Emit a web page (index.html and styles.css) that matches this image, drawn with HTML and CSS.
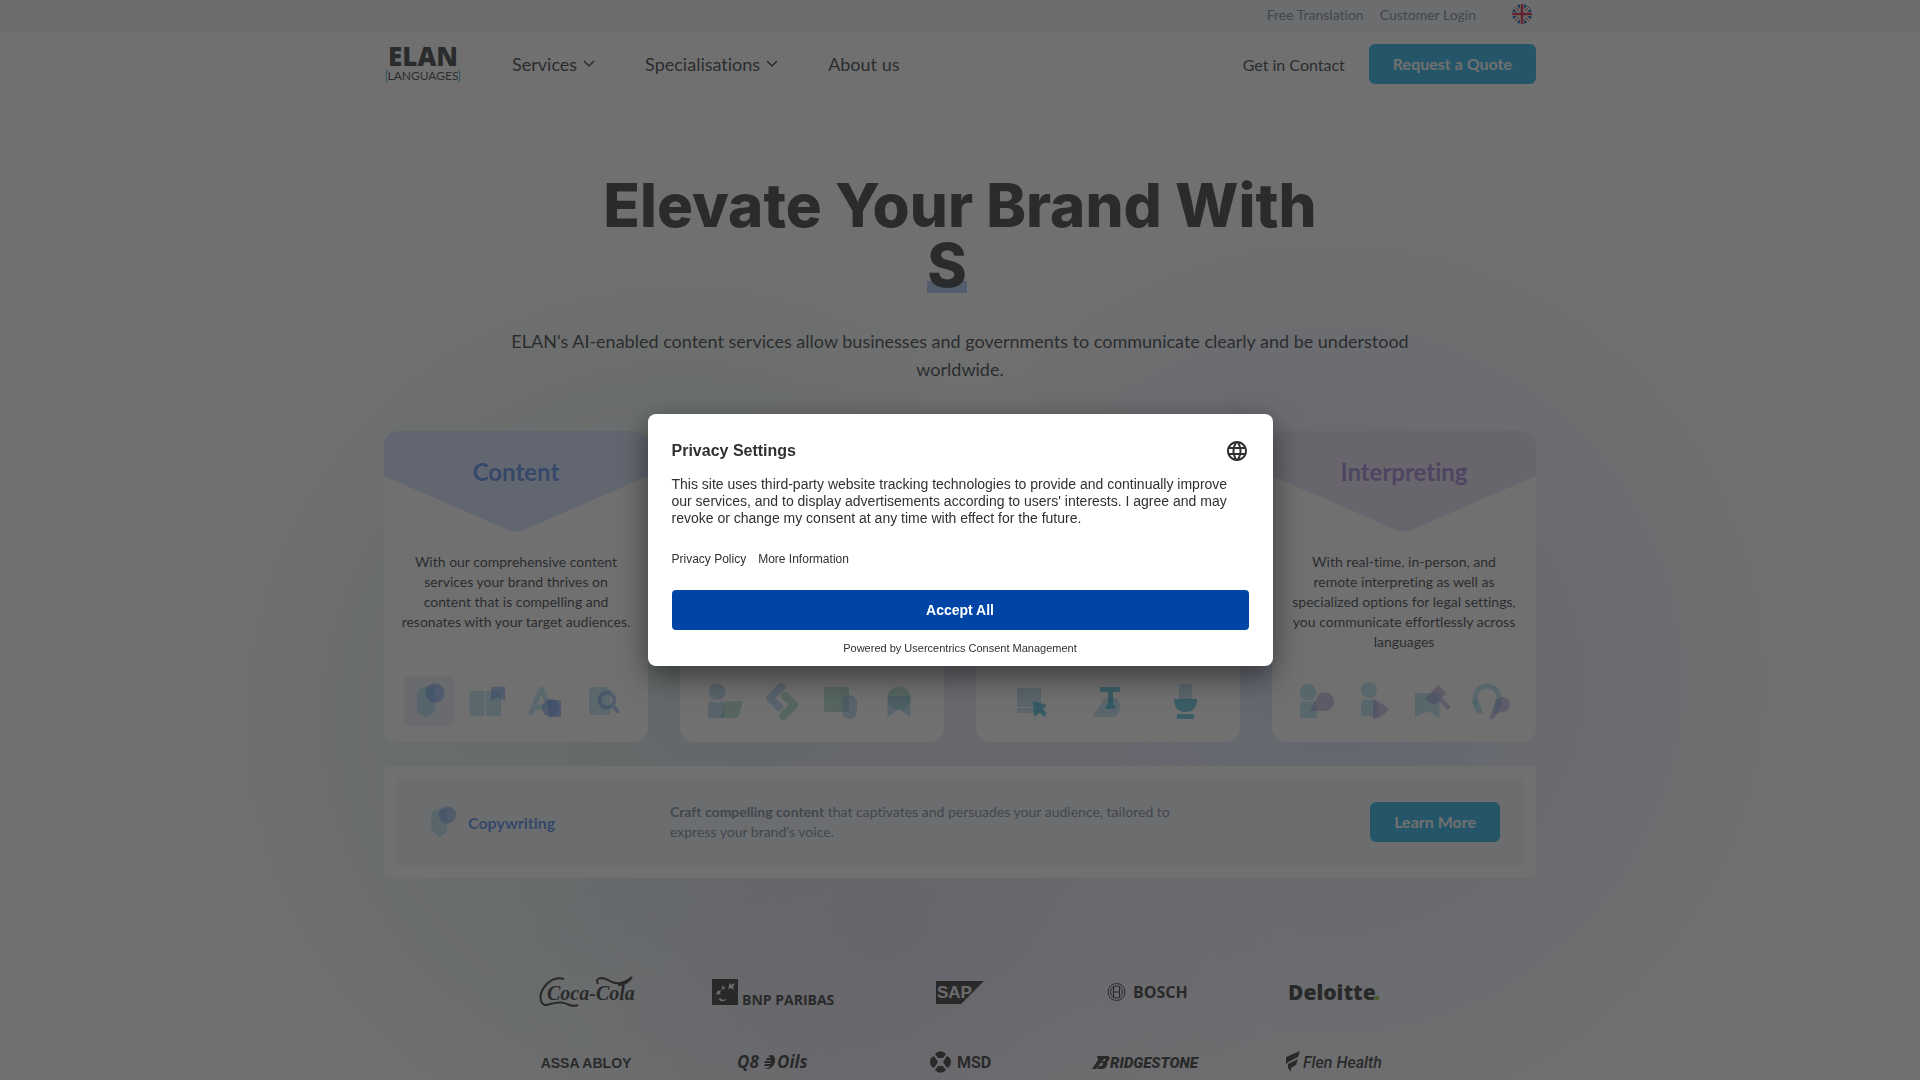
FILE: index.html
```html
<!DOCTYPE html>
<html lang="en">
<head>
    <meta charset="UTF-8">
    <meta name="viewport" content="width=device-width, initial-scale=1.0">
    <title>ELAN Languages</title>
    <link rel="stylesheet" href="styles.css">
</head>
<body>
    <div class="top-bar">
        <div class="container top-bar-inner">
            <a href="#">Free Translation</a>
            <a href="#">Customer Login</a>
            <button type="button" class="language" aria-label="Language">
                <svg width="20" height="20" viewBox="0 0 20 20">
                    <clipPath id="flag"><circle cx="10" cy="10" r="10"/></clipPath>
                    <g clip-path="url(#flag)">
                        <path fill="#f0f0f0" d="M0 0h20v20H0z"/>
                        <path fill="#0052b4" d="M3 0h5v5zM0 3v5h5zM12 0h5l-5 5zM20 3v5h-5zM0 12h5l-5 5zM8 15v5H3zM12 15v5h5zM15 12h5v5z"/>
                        <path fill="#d80027" d="M8.700 0h2.600v8.700H20v2.600h-8.700V20H8.700v-8.700H0V8.700h8.700z"/>
                        <path stroke="#d80027" stroke-width="1" d="M3 3l4 4M17 3l-4 4M3 17l4-4M17 17l-4-4"/>
                    </g>
                </svg>
            </button>
        </div>
    </div>

    <header class="container header">
        <a href="#" class="logo" aria-label="ELAN Languages">
            <svg width="78" height="40" viewBox="0 0 78 40">
                <text class="logo-name" x="39" y="22" text-anchor="middle">ELAN</text>
                <text class="logo-sub" x="39" y="36" text-anchor="middle">LANGUAGES</text>
                <path class="logo-brace" d="M4 26q-1.500 0-1.500 2v2.500L1.500 32l1 1.500V36q0 2 1.500 2M74 26q1.500 0 1.500 2v2.500l1 1.500-1 1.500V36q0 2-1.500 2"/>
            </svg>
        </a>
        <nav class="nav">
            <a href="#">Services <svg class="chevron" viewBox="0 0 12 8"><path d="M1 1l5 5 5-5"/></svg></a>
            <a href="#">Specialisations <svg class="chevron" viewBox="0 0 12 8"><path d="M1 1l5 5 5-5"/></svg></a>
            <a href="#">About us</a>
        </nav>
        <div class="header-actions">
            <a href="#">Get in Contact</a>
            <button type="button" class="button">Request a Quote</button>
        </div>
    </header>

    <main class="main">
        <section class="container hero">
            <h1>Elevate Your Brand With<br><span class="typed">S</span><span class="caret"></span></h1>
            <p>ELAN's AI-enabled content services allow businesses and governments to communicate clearly and be understood worldwide.</p>
        </section>

        <section class="container">
            <div class="cards">
                <article class="card content">
                    <div class="card-head">
                        <svg viewBox="0 0 264 101" preserveAspectRatio="none"><path d="M0 0h264v45L142 98q-10 5-20 0L0 45z"/></svg>
                        <h2>Content</h2>
                    </div>
                    <p>With our comprehensive content services your brand thrives on content that is compelling and resonates with your target audiences.</p>
                    <div class="icons">
                        <button type="button" class="icon active" aria-label="Copywriting">
                            <svg viewBox="0 0 36 36"><path class="base" d="M6 11q0-7 9-7.500h9V26q0 3-3 5.500L15.500 35 9 31q-3-2-3-5z"/><circle class="accent" cx="24" cy="10" r="9.700"/></svg>
                        </button>
                        <button type="button" class="icon" aria-label="Editorial">
                            <svg viewBox="0 0 36 36"><path class="base" d="M3 8h12.500v25H3q-2.500 0-2.500-2.500v-20Q.5 8 3 8zM17 8h12.500Q32 8 32 10.500v20q0 2.500-2.500 2.500H17z"/><path class="accent" d="M22 6q0-2.300 2.300-2.300H36v14l-7-3.500-7 3.500z"/></svg>
                        </button>
                        <button type="button" class="icon" aria-label="Design">
                            <svg viewBox="0 0 36 36"><path class="base-line" d="M4 30L14.500 6 22 23M9 24h8"/><path class="accent" d="M20 17h14v17H22z"/><circle class="accent" cx="24" cy="25" r="9"/></svg>
                        </button>
                        <button type="button" class="icon" aria-label="Research">
                            <svg viewBox="0 0 36 36"><path class="base" d="M6 4h16l3.500 3.500V29q0 3-3 3H6q-2 0-2-2V6q0-2 2-2z"/><g class="accent-line"><circle cx="22" cy="17" r="7.500"/><path d="M27.500 22.500l5 5.500"/></g></svg>
                        </button>
                    </div>
                </article>

                <article class="card translation">
                    <div class="card-head">
                        <svg viewBox="0 0 264 101" preserveAspectRatio="none"><path d="M0 0h264v45L142 98q-10 5-20 0L0 45z"/></svg>
                    </div>
                    <div class="icons">
                        <button type="button" class="icon" aria-label="Translator">
                            <svg viewBox="0 0 36 36"><circle class="base" cx="10" cy="9" r="8.300"/><path class="base" d="M1 35V23q0-4 3-5l6 2 6-2q3 2 2 6l-1 11z"/><path class="accent" d="M19 18h14q3 0 2 3l-3 11q-1 3-4 3H13z"/></svg>
                        </button>
                        <button type="button" class="icon" aria-label="Localisation">
                            <svg viewBox="0 0 36 36"><path class="base-line thick" d="M16 4L5 15l9 9"/><path class="accent-line thick" d="M20 13l9 9-11 11"/></svg>
                        </button>
                        <button type="button" class="icon" aria-label="Documents">
                            <svg viewBox="0 0 36 36"><rect class="accent" x="1" y="4" width="25" height="25" rx="2"/><rect class="base" x="19" y="12" width="15" height="24" rx="7.500"/></svg>
                        </button>
                        <button type="button" class="icon" aria-label="Certified">
                            <svg viewBox="0 0 36 36"><circle class="accent" cx="18" cy="15" r="11.500"/><path class="base" d="M6.500 13h23v21L18 26 6.500 34z"/></svg>
                        </button>
                    </div>
                </article>

                <article class="card media">
                    <div class="card-head">
                        <svg viewBox="0 0 264 101" preserveAspectRatio="none"><path d="M0 0h264v45L142 98q-10 5-20 0L0 45z"/></svg>
                    </div>
                    <div class="icons">
                        <button type="button" class="icon" aria-label="E-learning">
                            <svg viewBox="0 0 36 36"><path class="base" d="M4 5h24v19H4zM4 25h24v5H6q-2 0-2-2z"/><path class="accent" d="M20 18l14 4-4 4 4 4-3 4-4-4-6 4z"/></svg>
                        </button>
                        <button type="button" class="icon" aria-label="Typesetting">
                            <svg viewBox="0 0 36 36"><path class="base" d="M14 16q3-2 6-2 10 0 10 10t-10 10H5q-2-1-1-3z"/><path class="accent" d="M10 4h20v5h-7v13h2v4h-9v-4h2V9h-8z"/></svg>
                        </button>
                        <button type="button" class="icon" aria-label="Voice-over">
                            <svg viewBox="0 0 36 36"><path class="base" d="M12 4q0-3 3-3h5q5 0 5 3v13H12z"/><path class="accent" d="M7 16h23q0 13-11.500 13T7 16zM10 31h17v5H10z"/></svg>
                        </button>
                    </div>
                </article>

                <article class="card interpreting">
                    <div class="card-head">
                        <svg viewBox="0 0 264 101" preserveAspectRatio="none"><path d="M0 0h264v45L142 98q-10 5-20 0L0 45z"/></svg>
                        <h2>Interpreting</h2>
                    </div>
                    <p>With real-time, in-person, and remote interpreting as well as specialized options for legal settings, you communicate effortlessly across languages</p>
                    <div class="icons">
                        <button type="button" class="icon" aria-label="On-site interpreting">
                            <svg viewBox="0 0 36 36"><circle class="base" cx="9" cy="9.300" r="8.300"/><path class="base" d="M1 35V23q0-4 4-5l5 1 4-1q4 1 4 6v11z"/><path class="accent" d="M11 28l6-12a9.300 9.300 0 1 1 9 12z"/></svg>
                        </button>
                        <button type="button" class="icon" aria-label="Remote interpreting">
                            <svg viewBox="0 0 36 36"><circle class="base" cx="12" cy="7" r="8"/><path class="base" d="M4 33V21q0-4 4-5l4 1 5-1q4 1 4 6v11z"/><path class="accent" d="M16 17q8 2 16 9-6 8-16 10z"/></svg>
                        </button>
                        <button type="button" class="icon" aria-label="Legal interpreting">
                            <svg viewBox="0 0 36 36"><path class="base" d="M0 10h24.500v24.500L12 28 0 34.500z"/><path class="accent" d="M10 16L23 2l8 8-4 5 9 9-3 3-9-9-5 4z"/></svg>
                        </button>
                        <button type="button" class="icon" aria-label="Conference interpreting">
                            <svg viewBox="0 0 36 36"><path class="base-line" d="M2 20v-5a12 12 0 0 1 24 0v5"/><path class="base" d="M0 20q0-4 5-4l5 14q-8 4-10-10zM28 20q0-4-5-4l-5 14q8 4 10-10z"/><path class="accent" d="M22 22a7.500 7.500 0 1 1 8 7l-5 1-6 7-3-3 6-7z"/></svg>
                        </button>
                    </div>
                </article>
            </div>

            <div class="detail">
                <div class="detail-inner content">
                    <svg class="detail-icon" viewBox="0 0 36 36"><path class="base" d="M6 11q0-7 9-7.500h9V26q0 3-3 5.500L15.500 35 9 31q-3-2-3-5z"/><circle class="accent" cx="24" cy="10" r="9.700"/></svg>
                    <h3>Copywriting</h3>
                    <p><strong>Craft compelling content</strong> that captivates and persuades your audience, tailored to express your brand's voice.</p>
                    <button type="button" class="button">Learn More</button>
                </div>
            </div>
        </section>

        <section class="clients">
            <svg width="96" height="36" viewBox="0 0 96 36">
                <text class="coca" x="9" y="26">Coca-Cola</text>
                <path class="mark-line" d="M26 5C12 1 0 17 3 27q2 6 9 3 12-3 17 0 6 3 11 1M60 10q-3-6 4-6 5 1 10 4 9 4 20-5-5 8-14 8"/>
            </svg>
            <svg width="122" height="36" viewBox="0 0 122 36">
                <path class="mark" d="M0 5h26v26H0z"/>
                <path class="cut" d="M17 9l2 2 4-2-2 4 1 3-3-2-3 1 1-3zM10 11l1 2 3-1-2 2 1 2-2-1-2 1 1-2zM6 16l1 1 2-1-1 3 1 2-2-1-3 1 1-3zM8 23q1 4 7 2-4 4-8 1z"/>
                <text class="bnp" x="30" y="31">BNP PARIBAS</text>
            </svg>
            <svg width="48" height="36" viewBox="0 0 48 36">
                <path class="mark" d="M0 7h48L25 30H0z"/>
                <text class="sap" x="1" y="24">SAP</text>
            </svg>
            <svg width="80" height="36" viewBox="0 0 80 36">
                <g class="bosch-ring"><circle cx="9.500" cy="18" r="8.500"/><circle cx="9.500" cy="18" r="6"/><path d="M6.500 12v12M12.500 12v12M6.500 18h6"/></g>
                <text class="bosch" x="26" y="24">BOSCH</text>
            </svg>
            <svg width="92" height="36" viewBox="0 0 92 36">
                <text class="deloitte" x="0" y="26">Deloitte</text>
                <circle cx="89" cy="24" r="2.500" fill="#86bc25"/>
            </svg>
            <svg width="92" height="36" viewBox="0 0 92 36">
                <text class="assa" x="46" y="24" text-anchor="middle">ASSA ABLOY</text>
            </svg>
            <svg width="72" height="36" viewBox="0 0 72 36">
                <text class="oils" x="0" y="24">Q8</text>
                <path class="mark" d="M31 12q6-3 7 3 1 6-6 10h-4q4-1 5-3h-6l1-2h6v-1h-7l1-2h6v-1h-5l1-2h4z"/>
                <text class="oils" x="40" y="24">Oils</text>
            </svg>
            <svg width="64" height="36" viewBox="0 0 64 36">
                <path class="mark" d="M7 10a7 7 0 0 1 11 0l-3 4h-5zM7 26a7 7 0 0 0 11 0l-3-4h-5zM6 12l4 6-4 6a6.500 6.500 0 0 1 0-12zM19 12l-4 6 4 6a6.500 6.500 0 0 0 0-12z"/>
                <text class="msd" x="29" y="24">MSD</text>
            </svg>
            <svg width="110" height="36" viewBox="0 0 110 36">
                <path class="mark" d="M5 12h10q4 0 2 4l-2 2q1 1 0 3-1 4-5 4H5l2-3h3l1-3H9l2-2h2l1-2h-2l-8 10H0l6-9z"/>
                <text class="bridge" x="18" y="24">RIDGESTONE</text>
            </svg>
            <svg width="98" height="36" viewBox="0 0 98 36">
                <path class="mark" d="M1 13l14-6-2 6-8 4-4 3zM3 20l10-5-2 6-5 3v4l-3-4z"/>
                <text class="flen" x="18" y="24">Flen Health</text>
            </svg>
        </section>
    </main>

    <div class="overlay">
        <div class="privacy" role="dialog" aria-labelledby="privacyTitle">
            <div class="privacy-head">
                <h2 id="privacyTitle">Privacy Settings</h2>
                <button type="button" class="globe" aria-label="Select language">
                    <svg width="24" height="24" viewBox="0 0 24 24"><path d="M11.990 2C6.470 2 2 6.480 2 12s4.470 10 9.990 10C17.520 22 22 17.520 22 12S17.520 2 11.990 2zm6.930 6h-2.950a15.650 15.650 0 0 0-1.380-3.560A8.030 8.030 0 0 1 18.920 8zM12 4.040c.83 1.200 1.480 2.530 1.910 3.960h-3.820c.43-1.430 1.080-2.760 1.910-3.960zM4.260 14C4.100 13.360 4 12.690 4 12s.1-1.360.26-2h3.380c-.08.660-.14 1.320-.14 2s.06 1.340.14 2H4.260zm.82 2h2.950c.32 1.250.78 2.450 1.380 3.560A7.990 7.990 0 0 1 5.080 16zm2.950-8H5.080a7.990 7.990 0 0 1 4.330-3.560A15.650 15.650 0 0 0 8.030 8zM12 19.960c-.83-1.200-1.480-2.530-1.910-3.960h3.820c-.43 1.430-1.080 2.760-1.910 3.960zM14.340 14H9.660c-.09-.66-.16-1.320-.16-2s.07-1.350.16-2h4.680c.09.650.16 1.320.16 2s-.07 1.340-.16 2zm.25 5.560c.6-1.110 1.060-2.310 1.380-3.560h2.950a8.030 8.030 0 0 1-4.330 3.560zM16.360 14c.08-.66.14-1.320.14-2s-.06-1.340-.14-2h3.380c.16.640.26 1.310.26 2s-.1 1.360-.26 2h-3.380z"/></svg>
                </button>
            </div>
            <p>This site uses third-party website tracking technologies to provide and continually improve our services, and to display advertisements according to users' interests. I agree and may revoke or change my consent at any time with effect for the future.</p>
            <div class="privacy-links">
                <a href="#">Privacy Policy</a>
                <a href="#">More Information</a>
            </div>
            <button type="button" class="accept">Accept All</button>
            <div class="powered">Powered by <a href="#">Usercentrics Consent Management</a></div>
        </div>
    </div>
</body>
</html>
```
FILE: styles.css
```css
* {
    box-sizing: border-box;
}

body {
    margin: 0;
    overflow: hidden; /* no scrolling while the consent dialog is open */
    font-family: Lato, sans-serif;
    font-size: 16px;
    font-variant-ligatures: none;
    color: #14181f;
    background-color: #fff;
    background-image:
        radial-gradient(circle 400px at 890px 920px, rgba(214, 200, 238, 0.6), rgba(214, 200, 238, 0)),
        radial-gradient(circle 480px at 1330px 680px, rgba(190, 206, 250, 0.7), rgba(190, 206, 250, 0)),
        radial-gradient(circle 500px at 680px 720px, rgba(196, 228, 224, 0.8), rgba(196, 228, 224, 0));
}

h1, h2, h3, p {
    margin: 0;
}

a {
    color: inherit;
    text-decoration: none;
}

button {
    font-family: inherit;
    border: none;
    padding: 0;
    background: none;
    cursor: pointer;
}

svg {
    display: block;
    overflow: visible;
}

.container {
    max-width: 1152px;
    margin: 0 auto;
}

.top-bar {
    background-color: #eef4fc;
    color: #64748b;
    font-size: 14px;
}

.top-bar-inner {
    display: flex;
    justify-content: flex-end;
    align-items: center;
    gap: 16px;
    height: 32px;
    padding: 0 4px 4px 0;
}

.language {
    margin-left: 20px;
}

.header {
    display: flex;
    align-items: center;
    height: 64px;
}

.logo-name {
    font: 800 26px "Open Sans", sans-serif;
    fill: #14181f;
}

.logo-sub {
    font: 12px Lato, sans-serif;
    fill: #14181f;
}

.logo-brace {
    fill: none;
    stroke: #00a3e0;
}

.nav {
    display: flex;
    gap: 50px;
    margin-left: 50px;
    font-size: 18px;
}

.nav a {
    display: flex;
    align-items: center;
    gap: 6px;
}

.chevron {
    width: 12px;
    height: 8px;
    fill: none;
    stroke: #14181f;
    stroke-width: 1.5;
}

.header-actions {
    display: flex;
    align-items: center;
    gap: 24px;
    margin-left: auto;
}

.button {
    height: 40px;
    padding: 0 24px 2px;
    border-radius: 6px;
    background-color: #00a4e4;
    color: #fff;
    font-size: 16px;
    font-weight: bold;
}

.hero {
    padding: 79px 0 48px;
    text-align: center;
}

.hero h1 {
    font-family: Inter, sans-serif;
    font-size: 60px;
    line-height: 60px;
    font-weight: 800;
}

.typed {
    background: linear-gradient(#9cc2f7, #9cc2f7) 0 52px / 100% 12px no-repeat;
}

/* blinking caret, in its off phase */
.caret {
    display: inline-block;
    width: 26px;
}

.hero p {
    max-width: 920px;
    margin: 32px auto 0;
    font-size: 18px;
    line-height: 28px;
}

.cards {
    display: grid;
    grid-template-columns: repeat(4, 1fr);
    gap: 32px;
}

.card {
    display: flex;
    flex-direction: column;
    height: 311px;
    overflow: hidden;
    border-radius: 14px;
    background-color: #fff;
    text-align: center;
}

.card-head {
    display: grid;
    height: 101px;
}

.card-head svg,
.card-head h2 {
    grid-area: 1 / 1;
}

.card-head svg {
    width: 100%;
    height: 101px;
    fill: var(--tint);
}

.card-head h2 {
    padding-top: 25px;
    font-size: 24px;
    line-height: 32px;
    color: var(--accent);
}

.card p {
    padding: 20px 17px 0;
    font-size: 14px;
    line-height: 20px;
}

.icons {
    display: flex;
    justify-content: space-around;
    margin-top: auto;
    padding: 0 16px 16px;
}

.icon {
    width: 50px;
    height: 50px;
    padding: 7px;
    border-radius: 6px;
}

.icon.active {
    background-color: #e6eefb;
}

.content {
    --tint: #d0defd;
    --accent: #3b7bea;
    --base: #6cc8ea;
}

.translation {
    --tint: #cdeedf;
    --accent: #4fb890;
    --base: #5fa8dc;
}

.media {
    --tint: #c9eef5;
    --accent: #00a0c8;
    --base: #6ab4e2;
}

.interpreting {
    --tint: #e3dcf1;
    --accent: #8a6fcc;
    --base: #5cc0dc;
}

.base {
    fill: var(--base);
    opacity: 0.5;
}

.accent {
    fill: var(--accent);
    opacity: 0.5;
}

.media .accent {
    opacity: 0.7;
}

.base-line,
.accent-line {
    fill: none;
    stroke: var(--base);
    stroke-width: 5;
    stroke-linecap: round;
    stroke-linejoin: round;
    opacity: 0.5;
}

.accent-line {
    stroke: var(--accent);
    stroke-width: 4;
}

.thick {
    stroke-width: 8;
}

.detail {
    margin-top: 24px;
    padding: 12px;
    border-radius: 6px;
    background-color: #fff;
}

.detail-inner {
    display: flex;
    align-items: center;
    height: 88px;
    padding: 0 24px 0 30px;
    border-radius: 6px;
    background-color: #f1f5fb;
    color: #64748b;
}

.detail-icon {
    width: 32px;
    height: 32px;
}

.detail-inner h3 {
    width: 202px;
    margin-left: 10px;
    font-size: 16px;
    color: var(--accent);
}

.detail-inner p {
    max-width: 512px;
    font-size: 14px;
    line-height: 20px;
}

.detail-inner .button {
    margin-left: auto;
}

.clients {
    display: grid;
    grid-template-columns: repeat(5, 1fr);
    justify-items: center;
    gap: 34px 40px;
    max-width: 896px;
    margin: 96px auto 0;
    fill: #111;
}

.clients .mark-line {
    fill: none;
    stroke: #111;
    stroke-width: 2;
}

.clients .cut,
.sap {
    fill: #f0edf5;
}

.coca {
    font: italic bold 20px "Liberation Serif", serif;
}

.bnp {
    font: bold 14px "Open Sans", sans-serif;
}

.sap {
    font: bold 17px "Liberation Sans", sans-serif;
}

.bosch {
    font: bold 16px "Open Sans", sans-serif;
}

.bosch-ring {
    fill: none;
    stroke: #111;
}

.deloitte {
    font: 800 21px "Open Sans", sans-serif;
}

.assa {
    font: bold 14px "Liberation Sans", sans-serif;
}

.oils {
    font: italic bold 17px "Open Sans", sans-serif;
}

.msd {
    font: bold 16px Roboto, sans-serif;
}

.bridge {
    font: italic 900 15px Roboto, sans-serif;
}

.flen {
    font: italic 500 16px Roboto, sans-serif;
}

.overlay {
    position: fixed;
    inset: 0;
    display: flex;
    align-items: center;
    justify-content: center;
    background-color: rgba(51, 51, 51, 0.7);
    font-family: "Liberation Sans", Arial, sans-serif;
    color: #303030;
}

.privacy {
    width: 625px;
    padding: 24px 24px 10px;
    border-radius: 8px;
    background-color: #fff;
    box-shadow: 0 10px 30px rgba(0, 0, 0, 0.5);
}

.privacy-head {
    display: flex;
    justify-content: space-between;
    align-items: center;
    height: 26px;
}

.privacy-head h2 {
    font-size: 16px;
}

.globe svg {
    fill: #303030;
}

.privacy p {
    margin-top: 12px;
    font-size: 14px;
    line-height: 17px;
}

.privacy-links {
    display: flex;
    gap: 12px;
    margin-top: 24px;
    font-size: 12px;
    line-height: 16px;
}

.accept {
    width: 100%;
    height: 40px;
    margin-top: 23px;
    border-radius: 4px;
    background-color: #0045a5;
    color: #fff;
    font-size: 14px;
    font-weight: bold;
}

.powered {
    margin-top: 10px;
    font-size: 11px;
    line-height: 16px;
    text-align: center;
}
```
